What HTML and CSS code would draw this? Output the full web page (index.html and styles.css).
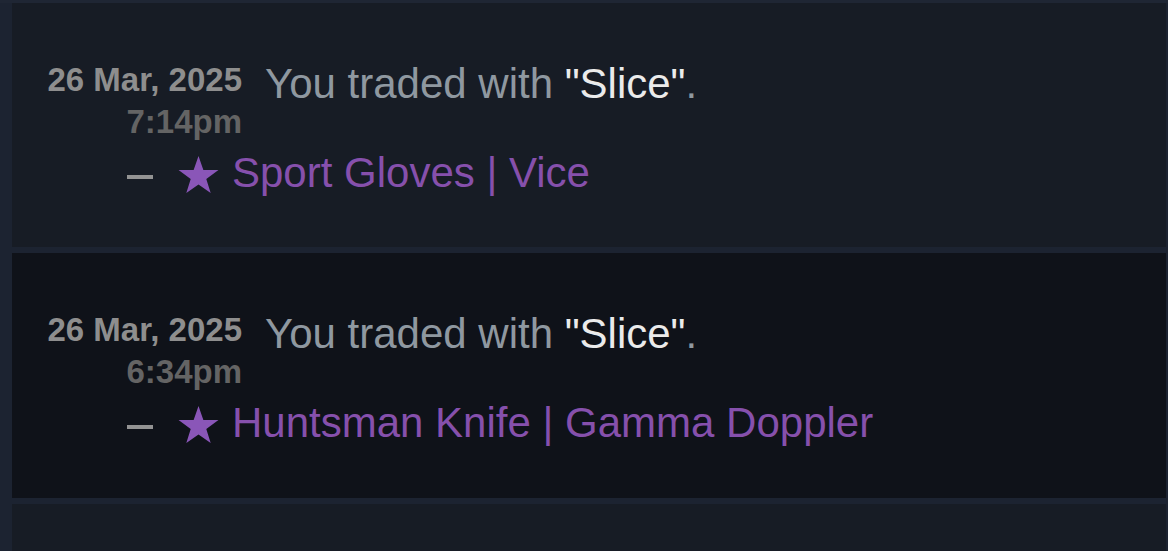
FILE: index.html
```html
<!DOCTYPE html>
<html>
<head>
<meta charset="utf-8">
<link rel="stylesheet" href="styles.css">
</head>
<body>
<div class="topbar"></div>
<div class="list">
  <div class="row row-a">
    <div class="head">
      <div class="date">26 Mar, 2025<div class="time">7:14pm</div></div>
      <div class="desc">You traded with <span class="who">"Slice"</span>.</div>
    </div>
    <div class="item">
      <span class="dash"></span>
      <svg class="star" viewBox="0 0 42 38" width="41" height="37"><polygon points="21,0 26,14.5 41.5,14.5 29,23.5 33.5,38 21,29.2 8.5,38 13,23.5 0.5,14.5 16,14.5"/></svg>
      <span class="name">Sport Gloves | Vice</span>
    </div>
  </div>
  <div class="row row-b">
    <div class="head">
      <div class="date">26 Mar, 2025<div class="time">6:34pm</div></div>
      <div class="desc">You traded with <span class="who">"Slice"</span>.</div>
    </div>
    <div class="item">
      <span class="dash"></span>
      <svg class="star" viewBox="0 0 42 38" width="41" height="37"><polygon points="21,0 26,14.5 41.5,14.5 29,23.5 33.5,38 21,29.2 8.5,38 13,23.5 0.5,14.5 16,14.5"/></svg>
      <span class="name">Huntsman Knife | Gamma Doppler</span>
    </div>
  </div>
  <div class="row row-a row-last"></div>
</div>
</body>
</html>
```
FILE: styles.css
```css
html, body {
  margin: 0;
  padding: 0;
}
body {
  background: #1c2331;
  font-family: "Liberation Sans", Arial, sans-serif;
  width: 1168px;
  height: 551px;
  overflow: hidden;
}
.topbar {
  height: 3px;
  background: #1f2634;
}
.list {
  margin-left: 12px;
  margin-right: 2px;
}
.row {
  height: 244px;
  box-sizing: border-box;
  padding-top: 56px;
  margin-bottom: 6px;
}
.row-a { background: #171c25; }
.row-b { background: #0f1219; height: 245px; }
.row-last { height: 60px; margin-bottom: 0; }
.head {
  display: flex;
  align-items: flex-start;
}
.date {
  width: 230px;
  text-align: right;
  font-weight: bold;
  font-size: 33px;
  line-height: 42px;
  color: #8e8e8e;
  flex: none;
}
.time {
  color: #646464;
}
.desc {
  margin-left: 23px;
  font-size: 42px;
  line-height: 50px;
  color: #8f98a0;
}
.who {
  color: #ebebeb;
}
.item {
  margin-top: 5px;
  padding-left: 115px;
  display: flex;
  align-items: center;
  height: 50px;
}
.dash {
  width: 26px;
  height: 4px;
  background: #939393;
  margin-top: 8px;
  flex: none;
}
.star {
  margin-left: 25px;
  fill: #8a56b8;
  flex: none;
  margin-top: 2px;
}
.name {
  margin-left: 13px;
  font-size: 42px;
  line-height: 50px;
  color: #8650ac;
}
```
